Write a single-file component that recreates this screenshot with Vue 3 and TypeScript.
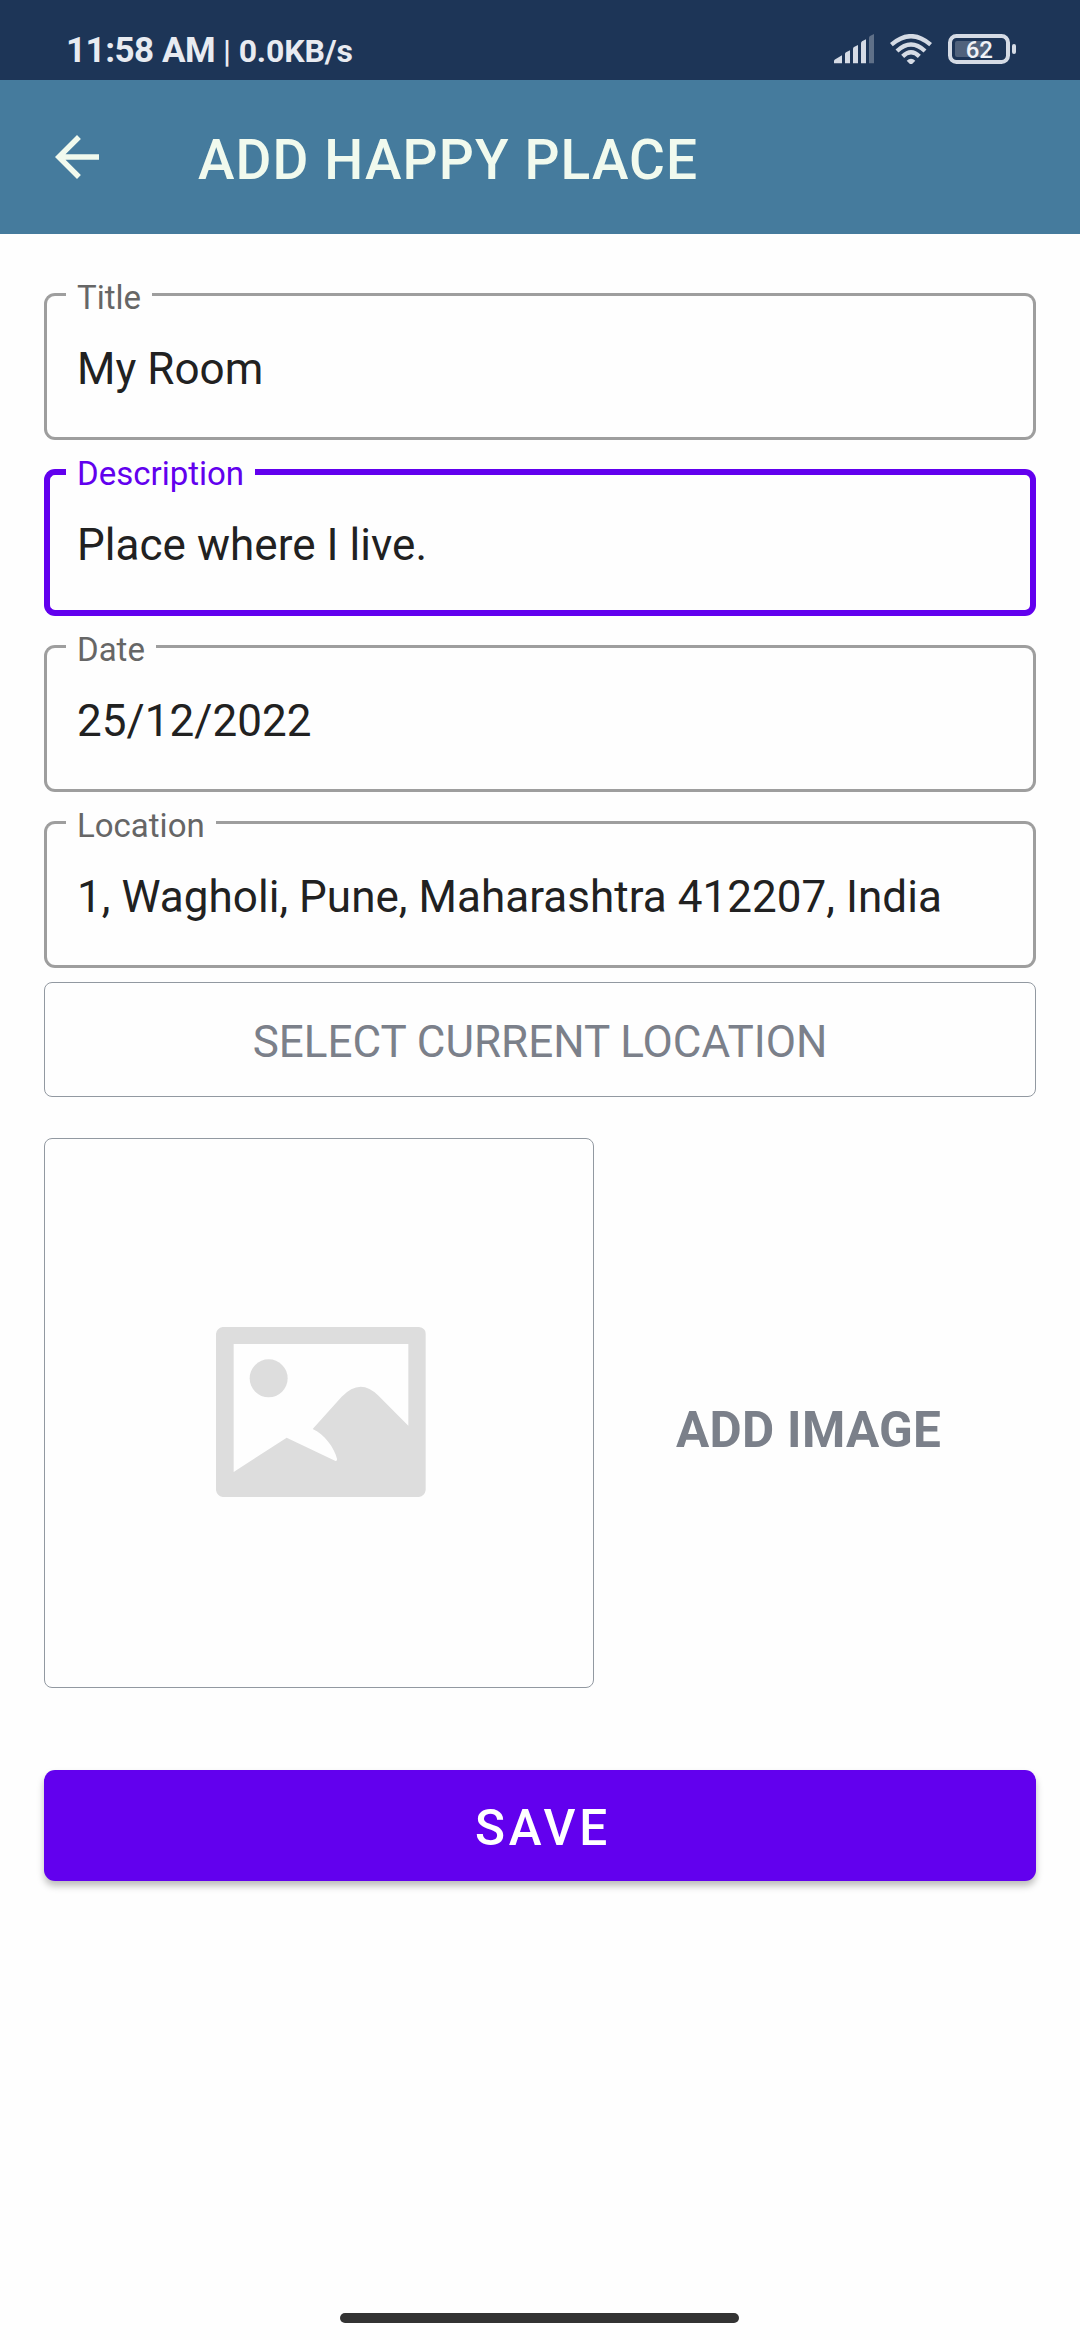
<script setup lang="ts">
import { reactive } from 'vue'

interface Field {
  label: string
  value: string
  focused?: boolean
}

const fields = reactive<Field[]>([
  { label: 'Title', value: 'My Room' },
  { label: 'Description', value: 'Place where I live.', focused: true },
  { label: 'Date', value: '25/12/2022' },
  { label: 'Location', value: '1, Wagholi, Pune, Maharashtra 412207, India' },
])
</script>

<template>
  <div class="screen">
    <div class="status">
      <span class="time">11:58 AM</span>
      <span class="rate"><span class="bar">|</span> 0.0KB/s</span>
      <div class="indicators">
        <svg class="signal" width="40" height="30" viewBox="0 0 120 90">
          <g fill="#d5dbe5">
            <path d="M0 88V81Q0 78 4 76L24 64V88Z" />
            <path d="M33 88V60Q33 57 36 55L48 49V88Z" />
            <path d="M57 88V44Q57 41 60 39L72 33V88Z" />
            <path d="M81 88V28Q81 25 84 22L96 16V88Z" />
          </g>
          <path d="M105 88V12Q105 8 108 6L120 0V88Z" fill="#5f7088" />
        </svg>
        <svg class="wifi" width="42" height="30" viewBox="0 0 126 90">
          <g fill="none" stroke="#d5dbe5" stroke-width="13">
            <path d="M4 32Q63 -19 122 32" />
            <path d="M21 51Q63 12 105 51" />
            <path d="M38 67Q63 43 88 67" />
          </g>
          <path d="M50 80Q63 68 76 80L67 89Q63 92 59 89Z" fill="#d5dbe5" />
        </svg>
        <svg class="battery" width="68" height="30" viewBox="0 0 68 30">
          <rect x="2" y="2" width="58" height="26" rx="6.5" fill="none" stroke="#d5dbe5" stroke-width="4" />
          <rect x="7" y="7" width="33" height="16" rx="2" fill="#50627c" />
          <rect x="64" y="10" width="4" height="10" rx="2" fill="#d5dbe5" />
          <text x="31.3" y="24.2" text-anchor="middle">62</text>
        </svg>
      </div>
    </div>

    <header class="toolbar">
      <svg width="66" height="66" viewBox="0 0 24 24">
        <path fill="#f1faee" d="M20 11H7.83l5.59-5.59L12 4l-8 8 8 8 1.41-1.41L7.83 13H20v-2z" />
      </svg>
      <h1>ADD HAPPY PLACE</h1>
    </header>

    <main>
      <div class="fields">
        <label v-for="f in fields" :key="f.label" class="field" :class="{ focused: f.focused }">
          <span class="outline">
            <span class="edge start"></span>
            <span class="notch"><span class="caption">{{ f.label }}</span></span>
            <span class="edge end"></span>
          </span>
          <input v-model="f.value" type="text" />
        </label>
      </div>

      <button class="locate" type="button">SELECT CURRENT LOCATION</button>

      <div class="picture-row">
        <div class="picture">
          <svg width="210" height="170" viewBox="0 0 630 510">
            <path
              fill="#ddd"
              fill-rule="evenodd"
              d="M20 0H609Q629 3 629 20V490Q626 507 609 510H20Q3 507 0 490V20Q3 3 20 0ZM53 51V435L212 332L357 401Q364 404 363 395C355 362 325 322 290 306L377 209Q433 151 486 205L577 296V51Z"
            />
            <circle cx="158" cy="154" r="57" fill="#ddd" />
          </svg>
        </div>
        <span class="add">ADD IMAGE</span>
      </div>

      <button class="save" type="button">SAVE</button>
    </main>

    <div class="home"></div>
  </div>
</template>

<style>
body {
  background: #fefefe;
}
</style>

<style scoped>
.screen {
  width: 1080px;
  height: 2340px;
  display: flex;
  flex-direction: column;
  background: #fefefe;
  font-family: Roboto, "Liberation Sans", sans-serif;
  overflow: hidden;
}

.screen * {
  box-sizing: border-box;
}

.status {
  height: 80px;
  flex: none;
  display: flex;
  align-items: flex-start;
  padding: 0 64px 0 66px;
  background: #1d3557;
  color: #e8ebf1;
  font-weight: 700;
  white-space: nowrap;
}

.time {
  font-size: 35px;
  line-height: 102px;
  letter-spacing: -0.5px;
}

.rate {
  margin-left: 8px;
  font-size: 32px;
  line-height: 102px;
  letter-spacing: -0.15px;
}

.bar {
  font-weight: 500;
}

.indicators {
  margin-left: auto;
  padding-top: 34px;
  display: flex;
}

.indicators svg {
  display: block;
}

.wifi {
  margin-left: 16px;
}

.battery {
  margin-left: 16px;
}

.battery text {
  font: 500 24px Roboto, sans-serif;
  fill: #f0f2f6;
}

.toolbar {
  height: 154px;
  flex: none;
  display: flex;
  align-items: center;
  padding-left: 44px;
  background: #457b9d;
}

h1 {
  margin: 0 0 0 88px;
  padding-top: 6px;
  font-size: 55px;
  font-weight: 500;
  line-height: 64px;
  letter-spacing: 1.1px;
  color: #f1faee;
  white-space: nowrap;
}

main {
  flex: 1;
  display: flex;
  flex-direction: column;
  padding: 59px 44px 0;
}

.fields {
  display: flex;
  flex-direction: column;
  gap: 29px;
}

.field {
  --line: 3px;
  --tone: #9e9e9e;
  display: grid;
  height: 147px;
}

.field.focused {
  --line: 6px;
  --tone: #6200ee;
}

.outline,
.field input {
  grid-area: 1 / 1;
}

.outline {
  display: flex;
}

.edge,
.notch {
  border: var(--line) solid var(--tone);
}

.start {
  width: 22px;
  border-right: 0;
  border-radius: 11px 0 0 11px;
}

.notch {
  border-width: 0 0 var(--line);
  padding: 0 11px;
}

.end {
  flex: 1;
  border-left: 0;
  border-radius: 0 11px 11px 0;
}

.caption {
  display: block;
  margin-top: -15px;
  font-size: 33px;
  line-height: 40px;
  color: #666;
  white-space: nowrap;
}

.focused .caption {
  color: #6200ee;
}

.field input {
  width: 100%;
  height: 147px;
  padding: 5px 33px 0;
  border: 0;
  outline: 0;
  background: transparent;
  font: 400 44px Roboto, sans-serif;
  letter-spacing: 0.04px;
  color: #212121;
}

button {
  font-family: inherit;
  padding: 0;
}

.locate {
  height: 115px;
  margin-top: 14px;
  padding-top: 5px;
  border: 1px solid #9299a1;
  border-radius: 8px;
  background: transparent;
  font-size: 44px;
  color: #7b808a;
}

.picture-row {
  display: flex;
  align-items: center;
  margin-top: 41px;
}

.picture {
  width: 550px;
  height: 550px;
  display: flex;
  align-items: center;
  justify-content: center;
  padding: 0 0 2px 4px;
  border: 1px solid #9299a1;
  border-radius: 8px;
}

.add {
  margin: 34px 0 0 82px;
  font-size: 49.5px;
  font-weight: 700;
  line-height: 60px;
  letter-spacing: 0.3px;
  color: #7b808a;
  white-space: nowrap;
}

.save {
  height: 111px;
  margin-top: 82px;
  padding: 5px 0 0 6px;
  border: 0;
  border-radius: 11px;
  background: #6200ee;
  box-shadow: 0 5px 7px rgba(0, 0, 0, 0.26);
  font-size: 49.5px;
  font-weight: 500;
  letter-spacing: 3.8px;
  color: #fff;
}

.home {
  width: 399px;
  height: 10px;
  flex: none;
  margin: 0 0 17px 340px;
  border-radius: 5px;
  background: #333;
}
</style>
